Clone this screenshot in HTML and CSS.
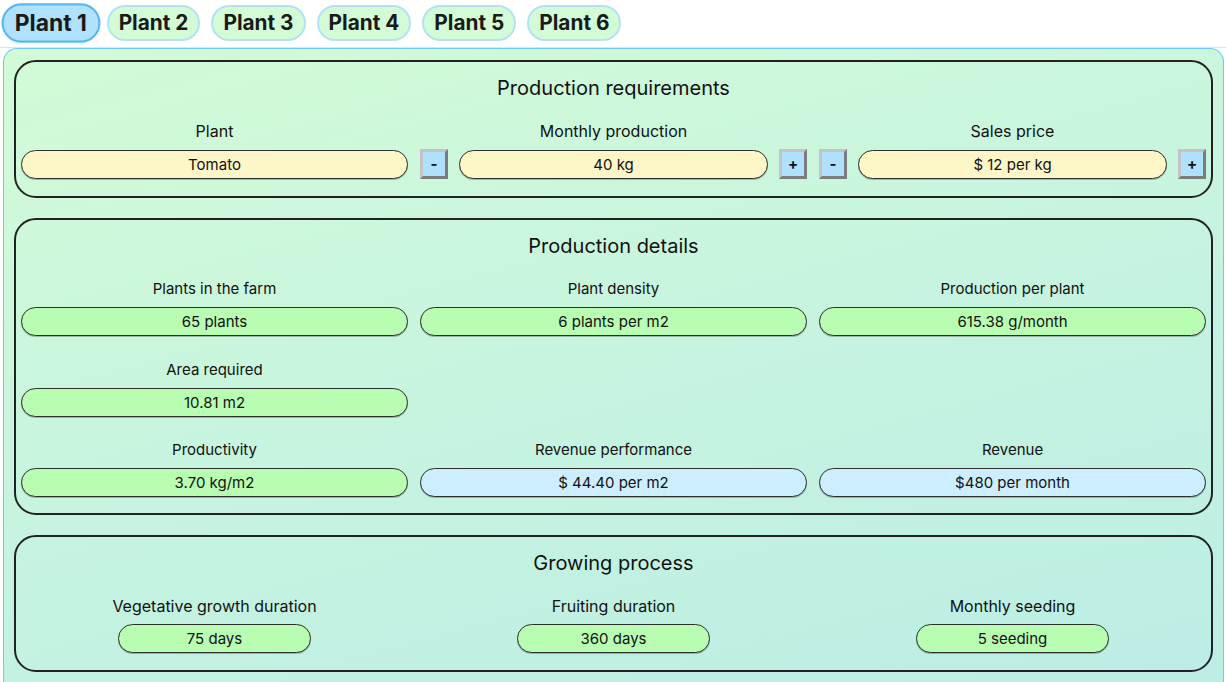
FILE: index.html
```html
<!DOCTYPE html>
<html>
<head>
<meta charset="utf-8">
<link rel="stylesheet" href="styles.css">
</head>
<body>
<nav class="tabs">
  <button class="tab active">Plant 1</button>
  <button class="tab">Plant 2</button>
  <button class="tab">Plant 3</button>
  <button class="tab">Plant 4</button>
  <button class="tab">Plant 5</button>
  <button class="tab">Plant 6</button>
</nav>
<main class="panel">
  <section class="card">
    <h2 class="card-title">Production requirements</h2>
    <div class="grid">
      <div class="cell">
        <div class="label">Plant</div>
        <div class="row"><div class="field yellow">Tomato</div></div>
      </div>
      <div class="cell">
        <div class="label">Monthly production</div>
        <div class="row"><button class="step">-</button><div class="field yellow">40 kg</div><button class="step">+</button></div>
      </div>
      <div class="cell">
        <div class="label">Sales price</div>
        <div class="row"><button class="step">-</button><div class="field yellow">$ 12 per kg</div><button class="step">+</button></div>
      </div>
    </div>
  </section>
  <section class="card details">
    <h2 class="card-title">Production details</h2>
    <div class="grid rows small">
      <div class="cell"><div class="label">Plants in the farm</div><div class="field green">65 plants</div></div>
      <div class="cell"><div class="label">Plant density</div><div class="field green">6 plants per m2</div></div>
      <div class="cell"><div class="label">Production per plant</div><div class="field green">615.38 g/month</div></div>
      <div class="cell"><div class="label">Area required</div><div class="field green">10.81 m2</div></div>
      <div class="cell"></div>
      <div class="cell"></div>
      <div class="cell"><div class="label">Productivity</div><div class="field green">3.70 kg/m2</div></div>
      <div class="cell"><div class="label">Revenue performance</div><div class="field blue">$ 44.40 per m2</div></div>
      <div class="cell"><div class="label">Revenue</div><div class="field blue">$480 per month</div></div>
    </div>
  </section>
  <section class="card">
    <h2 class="card-title">Growing process</h2>
    <div class="grid">
      <div class="cell narrow"><div class="label">Vegetative growth duration</div><div class="field green">75 days</div></div>
      <div class="cell narrow"><div class="label">Fruiting duration</div><div class="field green">360 days</div></div>
      <div class="cell narrow"><div class="label">Monthly seeding</div><div class="field green">5 seeding</div></div>
    </div>
  </section>
</main>
</body>
</html>
```
FILE: styles.css
```css
html, body {
  margin: 0;
  padding: 0;
  background: #ffffff;
  font-family: Inter, "Noto Sans", "Liberation Sans", sans-serif;
  color: #111;
}
.tabs {
  display: flex;
  gap: 11px;
  padding: 5px 6px 6px;
  border-bottom: 1px solid #e4e4e4;
}
.tab {
  font-family: Inter, "Noto Sans", "Liberation Sans", sans-serif;
  font-weight: 700;
  font-size: 20.8px;
  line-height: 26px;
  color: #1a1a1a;
  padding: 3px 10px;
  border: 2px solid #b3e2f7;
  border-radius: 18px;
  background: #d3fcd6;
  cursor: pointer;
}
.tab.active {
  background: #b0e1ff;
  border-color: #5ab9ee;
  transform: scale(1.1);
}
.panel {
  margin: 0 2px 0 3px;
  border: 1px solid #6cc9fb;
  border-bottom: none;
  border-radius: 14px 14px 0 0;
  padding: 11px 10px 10px;
  min-height: 620px;
  box-sizing: border-box;
  background: linear-gradient(165deg, #d2fbd6 0%, #c5f3e0 55%, #bbede6 100%);
}
.card {
  border: 2px solid #222;
  border-radius: 22px;
  padding: 14px 5px 17px;
  margin-bottom: 20px;
}
.card.details {
  padding-bottom: 16px;
}
.card-title {
  margin: 0;
  font-size: 20px;
  line-height: 24px;
  font-weight: 400;
  text-align: center;
  color: #111;
}
.grid {
  display: grid;
  grid-template-columns: repeat(3, 1fr);
  column-gap: 12px;
  margin-top: 21px;
}
.grid.rows {
  row-gap: 23.5px;
}
.cell {
  display: flex;
  flex-direction: column;
  gap: 8px;
}
.cell.narrow {
  align-items: center;
}
.cell.narrow .field {
  width: 193px;
}
.label {
  font-size: 16px;
  line-height: 20px;
  text-align: center;
}
.small .label {
  font-size: 15px;
}
.row {
  display: flex;
  align-items: center;
  gap: 11px;
  height: 30px;
}
.row .field {
  flex: 1;
}
.field {
  box-sizing: border-box;
  height: 29px;
  border: 1px solid #2e2e2e;
  border-radius: 15px;
  font-size: 15px;
  line-height: 27px;
  text-align: center;
  box-shadow: 0 1px 0 rgba(0, 0, 0, 0.25);
}
.yellow { background: #fdf6c7; }
.green { background: #b8fdb1; }
.blue { background: #cdeeff; }
.step {
  box-sizing: border-box;
  width: 28px;
  height: 30px;
  padding: 0;
  background: #afe1ff;
  border: 3px solid;
  border-color: #c4c4c4 #7c7c7c #7c7c7c #c4c4c4;
  font-family: Inter, "Noto Sans", "Liberation Sans", sans-serif;
  font-weight: 700;
  font-size: 15px;
  color: #111;
  line-height: 22px;
}
```
